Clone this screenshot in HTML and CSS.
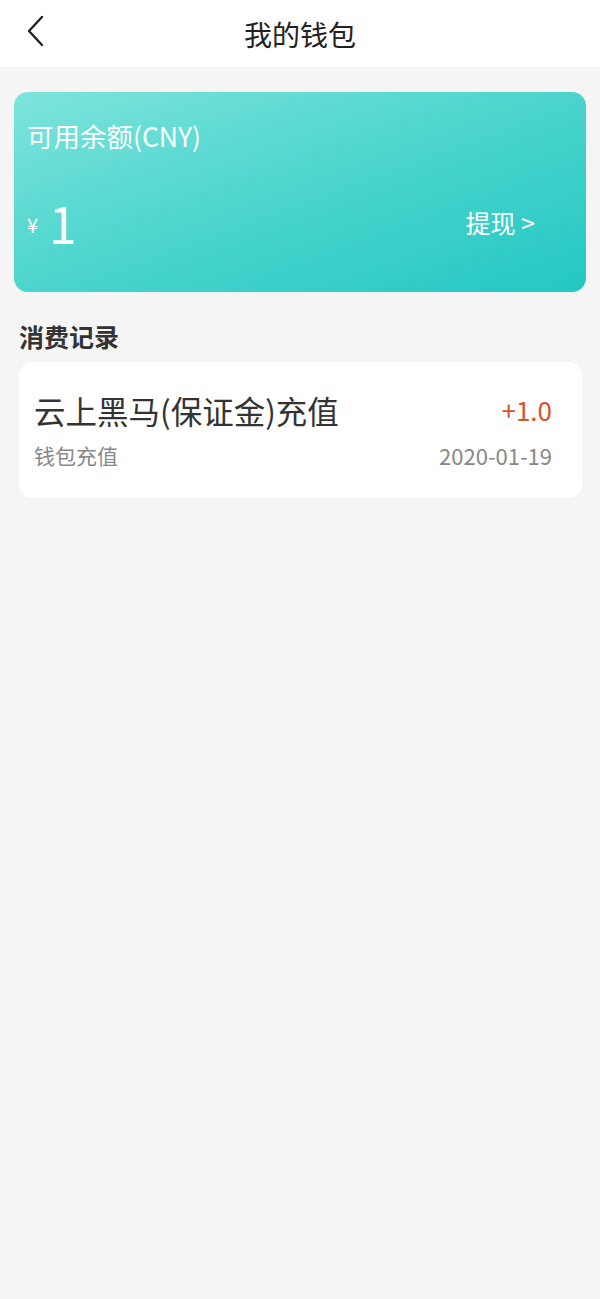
FILE: index.html
```html
<!DOCTYPE html>
<html lang="zh-CN">
<head>
<meta charset="utf-8">
<title>我的钱包</title>
<link rel="stylesheet" href="styles.css">
</head>
<body>
<header class="topbar">
  <span class="back">
    <svg width="20" height="32" viewBox="0 0 20 32"><path d="M16 2 L3 16 L16 30" fill="none" stroke="#222" stroke-width="2.4" stroke-linecap="round" stroke-linejoin="round"/></svg>
  </span>
  <h1 class="title">我的钱包</h1>
</header>
<main class="content">
  <section class="balance">
    <div class="balance-label">可用余额(CNY)</div>
    <div class="balance-row">
      <div class="amount"><span class="yen">¥</span><span class="num">1</span></div>
      <div class="withdraw">提现 &gt;</div>
    </div>
  </section>
  <h2 class="section-title">消费记录</h2>
  <section class="record">
    <div class="record-row">
      <span class="record-name">云上黑马(保证金)充值</span>
      <span class="record-amount">+1.0</span>
    </div>
    <div class="record-row sub">
      <span class="record-type">钱包充值</span>
      <span class="record-date">2020-01-19</span>
    </div>
  </section>
</main>
</body>
</html>
```

FILE: styles.css
```css
* { box-sizing: border-box; }
html, body { margin: 0; padding: 0; }
body {
  background: #f5f5f5;
  font-family: "Noto Sans CJK SC", "Noto Sans", sans-serif;
  width: 600px;
  min-height: 1299px;
}
.topbar {
  height: 67px;
  background: #fff;
  display: flex;
  align-items: center;
  justify-content: center;
  position: relative;
}
.back {
  position: absolute;
  left: 26px;
  top: 15px;
  display: block;
  width: 20px;
  height: 32px;
}
.back svg { display: block; }
.title {
  margin: 0;
  font-size: 28px;
  font-weight: 400;
  color: #222;
  line-height: 1;
}
.content {
  padding: 25px 14px 0 14px;
}
.balance {
  height: 200px;
  border-radius: 14px;
  background: linear-gradient(160deg, #7ee4db 0%, #4fd6cf 45%, #24c7c3 100%);
  color: #fff;
  padding: 26px 13px 0 13px;
}
.balance-label {
  font-size: 26.5px;
  line-height: 36px;
}
.balance-row {
  display: flex;
  justify-content: space-between;
  align-items: center;
  margin-top: 40px;
  padding-right: 38px;
}
.amount {
  display: flex;
  align-items: center;
}
.yen {
  font-size: 20px;
  line-height: 24px;
  margin-top: 5px;
  margin-right: 11px;
}
.num {
  font-size: 50px;
  font-weight: 400;
  line-height: 56px;
}
.withdraw {
  font-size: 25px;
  line-height: 30px;
}
.section-title {
  margin: 27px 0 0 5px;
  font-size: 25px;
  font-weight: 700;
  color: #333;
  line-height: 34px;
}
.record {
  margin: 9px 4px 0 5px;
  background: #fff;
  border-radius: 14px;
  padding: 28px 30px 27px 15px;
}
.record-row {
  display: flex;
  justify-content: space-between;
  align-items: center;
}
.record-name {
  font-size: 31.5px;
  color: #333;
  line-height: 40px;
}
.record-amount {
  font-size: 26px;
  color: #d6542d;
  line-height: 40px;
}
.record-row.sub { margin-top: 9px; }
.record-type {
  font-size: 21px;
  color: #888;
  line-height: 32px;
}
.record-date {
  font-size: 22px;
  color: #888;
  line-height: 32px;
}
```
